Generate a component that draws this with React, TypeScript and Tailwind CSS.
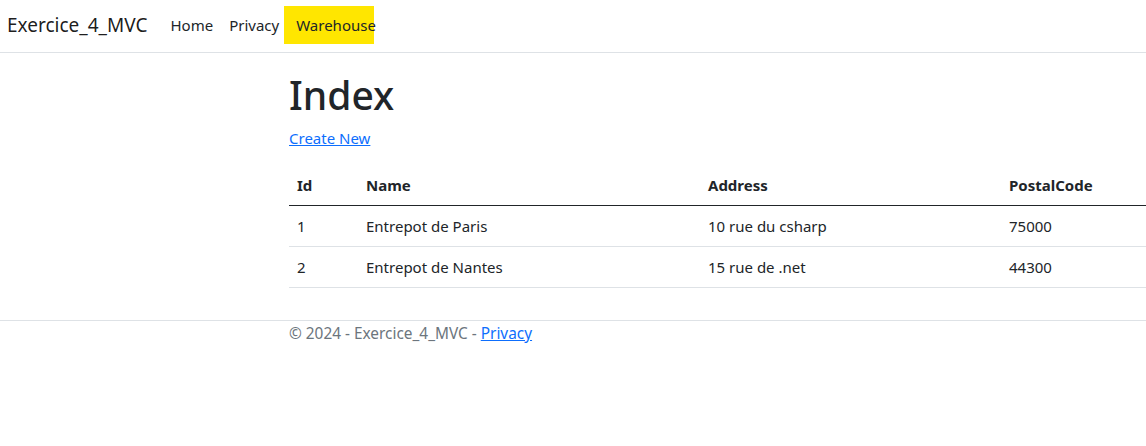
const warehouses = [
  { id: 1, name: 'Entrepot de Paris', address: '10 rue du csharp', postalCode: '75000' },
  { id: 2, name: 'Entrepot de Nantes', address: '15 rue de .net', postalCode: '44300' },
];

export default function App() {
  return (
    <div className="w-[1146px] h-[446px] overflow-hidden bg-white text-[#212529] font-['Noto_Sans',sans-serif]">
      {/* Navbar */}
      <header className="h-[53px] pb-[2px] border-b border-[#dee2e6] flex items-center">
        <a className="pl-[7px] text-[19px] text-black/90 mr-[15px]">Exercice_4_MVC</a>
        <nav className="flex items-center text-[15px] text-[#212529]">
          <a className="px-2">Home</a>
          <a className="px-2">Privacy</a>
          <span className="-ml-[3px] bg-[#ffe600] h-[38px] w-[90px] flex items-center pl-[12px]">Warehouse</span>
        </nav>
      </header>

      {/* Contenu */}
      <main className="pl-[289px]">
        <h1 className="text-[39px] font-medium leading-[1.2] mt-[19px] mb-[7px]">Index</h1>
        <a className="text-[15px] text-[#0d6efd] underline">Create New</a>
        <table className="w-[900px] mt-[16px] text-[15px] border-collapse">
          <thead>
            <tr className="border-b border-[#212529] h-[40px] text-left">
              <th className="font-bold px-2 w-[69px]">Id</th>
              <th className="font-bold px-2 w-[342px]">Name</th>
              <th className="font-bold px-2 w-[301px]">Address</th>
              <th className="font-bold px-2">PostalCode</th>
            </tr>
          </thead>
          <tbody>
            {warehouses.map((w) => (
              <tr key={w.id} className="border-b border-[#dee2e6] h-[41px]">
                <td className="px-2">{w.id}</td>
                <td className="px-2">{w.name}</td>
                <td className="px-2">{w.address}</td>
                <td className="px-2">{w.postalCode}</td>
              </tr>
            ))}
          </tbody>
        </table>
      </main>

      {/* Footer */}
      <footer className="mt-[32px] border-t border-[#dee2e6] pl-[289px] pt-[1px] text-[15.4px] text-[#6c757d]">
        © 2024 - Exercice_4_MVC - <a className="text-[#0d6efd] underline">Privacy</a>
      </footer>
    </div>
  );
}
